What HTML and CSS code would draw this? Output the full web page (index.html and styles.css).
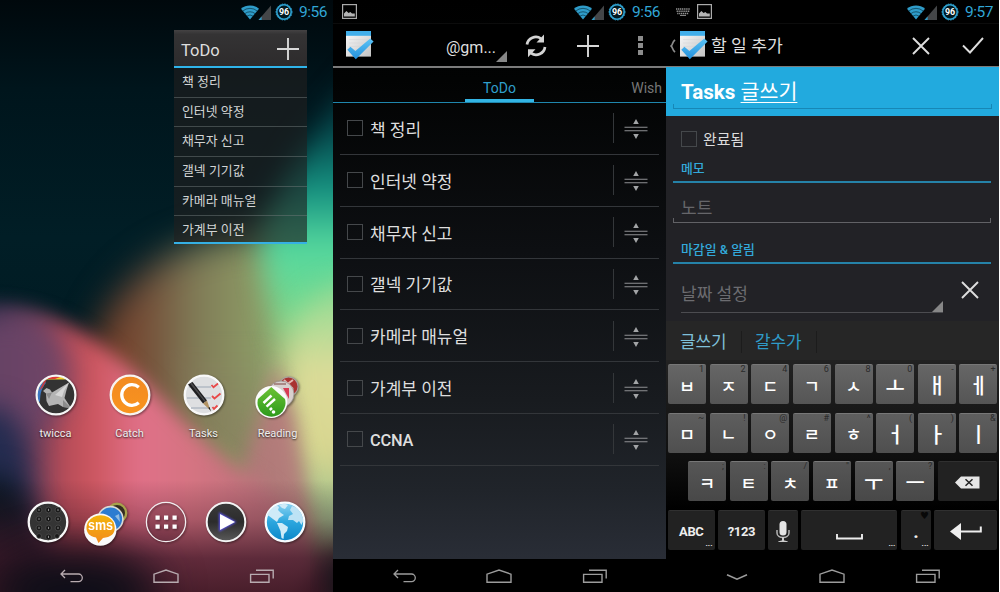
FILE: index.html
```html
<!DOCTYPE html>
<html lang="ko">
<head>
<meta charset="utf-8">
<title>Tasks</title>
<link rel="stylesheet" href="styles.css">
</head>
<body>
<svg class="defs" width="0" height="0" aria-hidden="true">
  <defs>
    <linearGradient id="gOrange" x1="0" y1="0" x2="0" y2="1"><stop offset="0" stop-color="#f28a22"/><stop offset="1" stop-color="#f9941e"/></linearGradient>
    <linearGradient id="gSms" x1="0" y1="0" x2="0" y2="1"><stop offset="0" stop-color="#f3b50c"/><stop offset="1" stop-color="#f28a1c"/></linearGradient>
    <linearGradient id="gGreen" x1="0" y1="0" x2="0" y2="1"><stop offset="0" stop-color="#6cc234"/><stop offset="1" stop-color="#2c9a1c"/></linearGradient>
    <linearGradient id="gSea" x1="0" y1="0" x2="0" y2="1"><stop offset="0" stop-color="#8ed4f2"/><stop offset=".5" stop-color="#2ba6de"/><stop offset="1" stop-color="#0c86c8"/></linearGradient>
    <linearGradient id="gDark" x1="0" y1="0" x2="0" y2="1"><stop offset="0" stop-color="#3a3a3a"/><stop offset=".5" stop-color="#2c2c2c"/><stop offset="1" stop-color="#5a5a5a"/></linearGradient>
    <linearGradient id="gPaper" x1="0" y1="0" x2="1" y2="1"><stop offset="0" stop-color="#fafafa"/><stop offset="1" stop-color="#c4c4c4"/></linearGradient>
    <linearGradient id="gCheck" x1="0" y1="0" x2="0" y2="1"><stop offset="0" stop-color="#5cc4f6"/><stop offset="1" stop-color="#2390dc"/></linearGradient>
    <filter id="glow" x="-50%" y="-50%" width="200%" height="200%"><feGaussianBlur stdDeviation="1"/></filter>
    <symbol id="radio" viewBox="0 0 32 16">
      <path d="M1 4.8 A14 14 0 0 1 19 4.8 L10 15.4 Z" fill="#2f9cc9"/>
      <path d="M2.6 7.2 A11 11 0 0 1 17.4 7.2 M4.8 9.7 A8 8 0 0 1 15.2 9.7 M7 12.1 A5 5 0 0 1 13 12.1" fill="none" stroke="#02232f" stroke-width=".6"/>
      <path d="M31 1.5 V16 H18.5 Z" fill="#444648"/><path d="M21.6 12.4 V16 H18.5 Z" fill="#2f9cc9"/>
    </symbol>
    <symbol id="battery" viewBox="0 0 18 18">
      <circle cx="9" cy="9" r="7.2" fill="#001820" stroke="#2fa3d2" stroke-width="1.6"/>
      <circle cx="9" cy="9" r="8" fill="none" stroke="#2fa3d2" stroke-width="1" stroke-dasharray="1.5 1.2"/>
      <text x="9" y="12.100" text-anchor="middle" font-family="Roboto,sans-serif" font-weight="700" font-size="8.900" fill="#fff">96</text>
    </symbol>
    <symbol id="photo" viewBox="0 0 15 15">
      <rect x=".6" y=".6" width="13.8" height="13.8" fill="none" stroke="#aaa" stroke-width="1.2"/>
      <path d="M2 12.6 V9.6 L4.4 7 L6.6 9 L8.4 8 L10 9.4 L12.8 9.6 V12.6 Z" fill="#b4b4b4"/>
    </symbol>
    <symbol id="keyboard" viewBox="0 0 14 8">
      <path d="M0 1 H14 M.6 3.2 H13.4 M1.2 5.4 H12.8" stroke="#929292" stroke-width="1.5" stroke-dasharray="1.3 .6"/><path d="M4 7.4 H10" stroke="#929292"/>
    </symbol>
    <symbol id="tasks" viewBox="0 0 28 29">
      <rect x="0" y="0" width="25" height="25.6" fill="url(#gPaper)"/>
      <path d="M3 8.6 H22 M3 12 H20 M3 15.4 H20 M3 19 H20" stroke="#d0d3d5" stroke-width=".5"/>
      <rect x="0" y="0" width="25" height="4.8" fill="#41aeea"/>
      <path d="M1.3 18.8 L4.4 15.7 L9.4 20 L24.2 7.4 L27.6 10.6 L9.8 28.2 Z" fill="url(#gCheck)"/>
    </symbol>
    <symbol id="plus" viewBox="0 0 22 22"><path d="M11 0 V22 M0 11 H22" stroke="#d8d8d8" stroke-width="1.9"/></symbol>
    <symbol id="cross" viewBox="0 0 18 18"><path d="M1 1 L17 17 M17 1 L1 17" stroke="#dedede" stroke-width="1.9"/></symbol>
    <symbol id="corner" viewBox="0 0 11 11"><path d="M11 0 V11 H0 Z" fill="#878787"/></symbol>
    <symbol id="back" viewBox="0 0 24 14"><path d="M6 1 L2 5 L6 9 M2 5 H19.5 A3.8 3.8 0 0 1 19.5 12.6 H11.5" fill="none" stroke="currentColor" stroke-width="1.3"/></symbol>
    <symbol id="home" viewBox="0 0 26 14"><path d="M1 13.3 V5.2 L13 1 L25 5.2 V13.3 Z" fill="none" stroke="currentColor" stroke-width="1.4"/></symbol>
    <symbol id="recents" viewBox="0 0 26 14"><path d="M1.6 5.4 H20 V13.3 H1.6 Z M7 1.2 H24.2 V9.5" fill="none" stroke="currentColor" stroke-width="1.4"/></symbol>
    <symbol id="down" viewBox="0 0 24 14"><path d="M2 5.8 L12 10.200 L22 5.8" fill="none" stroke="currentColor" stroke-width="1.6"/></symbol>
    <symbol id="grip" viewBox="0 0 24 20"><path d="M.5 8.2 H23.5 M.5 11.8 H23.5" stroke="#8e9092" stroke-width="1.1"/><path d="M12 0 L14.8 5 H9.2 Z M12 20 L14.8 15 H9.2 Z" fill="#a2a4a6"/></symbol>
  </defs>
</svg>

<main class="screens">
  <section class="screen launcher">
    <svg class="wallpaper" viewBox="0 0 333 592" color-interpolation-filters="sRGB" aria-hidden="true">
      <defs>
        <linearGradient id="w0" x1="0" y1="0" x2="0" y2="1"><stop offset="0" stop-color="#00080c"/><stop offset=".15" stop-color="#00151c"/><stop offset=".4" stop-color="#011e26"/><stop offset="1" stop-color="#02141c"/></linearGradient>
        <linearGradient id="w1" gradientUnits="userSpaceOnUse" x1="90" y1="0" x2="300" y2="0"><stop offset="0" stop-color="#7a3a22"/><stop offset=".28" stop-color="#74503a"/><stop offset=".5" stop-color="#807c58"/><stop offset=".75" stop-color="#8b9562"/><stop offset="1" stop-color="#8eb878"/></linearGradient>
        <linearGradient id="w1s" gradientUnits="userSpaceOnUse" x1="0" y1="340" x2="0" y2="450"><stop offset="0" stop-color="#8b7862" stop-opacity="0"/><stop offset="1" stop-color="#8b7862"/></linearGradient>
        <linearGradient id="w2" gradientUnits="userSpaceOnUse" x1="0" y1="0" x2="290" y2="0"><stop offset="0" stop-color="#3a3050"/><stop offset=".12" stop-color="#74405a"/><stop offset=".22" stop-color="#b64c58"/><stop offset=".32" stop-color="#cc565f"/><stop offset=".48" stop-color="#e07088"/><stop offset=".65" stop-color="#d67482"/><stop offset="1" stop-color="#b07078"/></linearGradient>
        <linearGradient id="w3" x1="0" y1="0" x2="0" y2="1"><stop offset="0" stop-color="#011e28"/><stop offset=".28" stop-color="#054a4e"/><stop offset=".48" stop-color="#159080"/><stop offset=".68" stop-color="#54d89e"/><stop offset="1" stop-color="#84d888"/></linearGradient>
        <linearGradient id="w4" x1="0" y1="0" x2="0" y2="1"><stop offset="0" stop-color="#88dc94"/><stop offset=".35" stop-color="#dcdb98"/><stop offset=".65" stop-color="#d8d690"/><stop offset="1" stop-color="#7fb48a"/></linearGradient>
        <linearGradient id="w5" x1="0" y1="0" x2="0" y2="1"><stop offset="0" stop-color="#30121f" stop-opacity="0"/><stop offset=".35" stop-color="#481828" stop-opacity=".3"/><stop offset=".7" stop-color="#45192a" stop-opacity=".8"/><stop offset="1" stop-color="#3e1724" stop-opacity=".92"/></linearGradient>
        <filter id="b10" x="-50%" y="-50%" width="200%" height="200%"><feGaussianBlur stdDeviation="9"/></filter>
        <filter id="b14" x="-50%" y="-50%" width="200%" height="200%"><feGaussianBlur stdDeviation="14"/></filter>
        <filter id="b18" x="-50%" y="-50%" width="200%" height="200%"><feGaussianBlur stdDeviation="18"/></filter>
        <filter id="b22" x="-80%" y="-80%" width="260%" height="260%"><feGaussianBlur stdDeviation="22"/></filter>
      </defs>
      <rect width="333" height="592" fill="url(#w0)"/>
      <path d="M84 420 C82 350 108 292 158 262 C205 232 270 229 375 229 V560 H180 Z" fill="url(#w1)" filter="url(#b18)"/>
      <path d="M385 50 C335 95 288 165 262 228 C260 262 272 305 284 340 L390 340 Z" fill="url(#w3)" filter="url(#b14)"/>
      <path d="M380 278 C318 280 290 318 283 352 C281 420 298 500 325 545 L380 540 Z" fill="url(#w4)" filter="url(#b14)"/>
      <path d="M150 340 H275 L255 480 Z" fill="url(#w1s)" opacity=".5" filter="url(#b10)"/>
      <path d="M236 492 L276 362 L296 420 L312 520 L310 580 L240 580 Z" fill="#b8747c" opacity=".85" filter="url(#b10)"/>
      <path d="M-60 304 C40 300 82 327 125 364 C168 402 198 442 248 474 C275 492 300 520 306 560 L300 650 L-60 650 Z" fill="url(#w2)" filter="url(#b10)"/>
      <ellipse cx="10" cy="376" rx="60" ry="62" fill="#6c4568" opacity=".9" filter="url(#b14)"/>
      <ellipse cx="-8" cy="475" rx="36" ry="70" fill="#242c50" filter="url(#b14)"/>
      <ellipse cx="-10" cy="570" rx="56" ry="95" fill="#0a1520" filter="url(#b14)"/>
      <rect y="480" width="333" height="112" fill="url(#w5)"/>
      <ellipse cx="75" cy="592" rx="85" ry="42" fill="#0e0e18" filter="url(#b22)"/>
      <ellipse cx="350" cy="585" rx="20" ry="38" fill="#0b1417" filter="url(#b14)"/>
    </svg>
    <header class="status"><div class="status-right"><svg class="radio"><use href="#radio"/></svg><svg class="battery"><use href="#battery"/></svg><time>9:56</time></div></header>
    <section class="widget">
      <div class="widget-head"><span>ToDo</span><svg class="i22"><use href="#plus"/></svg></div>
      <ul class="widget-list"><li>책 정리</li><li>인터넷 약정</li><li>채무자 신고</li><li>갤넥 기기값</li><li>카메라 매뉴얼</li><li>가계부 이전</li></ul>
    </section>
    <div class="apps">
      <div class="app"><svg class="app-icon" viewBox="0 0 42 42"><circle cx="21" cy="21" r="19.4" fill="#333"/><path d="M3 27 A19 19 0 0 1 9 7 L11 9 C7 13 5 19 5 28 Z" fill="#3a76c0"/><path d="M4 17 L9 7 L12 5 L8 13 Z" fill="#c83c3c"/><path d="M10 5 C17 1.500 26 2 31 4.500 L30 5.500 H12 Z" fill="#f0cf30"/><path d="M11 5 C17 1.500 21 2 25 3 L20 5 Z" fill="#dd3c38"/><path d="M8 17 L11.500 14 L15 15.500 L17 18.500 L34 8.500 L31.500 16 L29.500 24 L36 34 L28 33 L23 30 L14 32 L11.500 27 L11 19.500 Z" fill="#b4b4b4"/><path d="M20 21 L34 8.500 L29 17 L27 23 Z" fill="#d6d6d6"/><path d="M28 26 L36 34 L28 33 Z M11 19.500 L17 18.500 L14 25 Z" fill="#8c8c8c"/><circle cx="21" cy="21" r="19.4" fill="none" stroke="#f6f6f6" stroke-width="2.2"/></svg><span>twicca</span></div>
      <div class="app"><svg class="app-icon" viewBox="0 0 42 42"><circle cx="21" cy="21" r="19.3" fill="url(#gOrange)" stroke="#f8f4f0" stroke-width="2.3"/><path d="M29.8 13.2 A10.3 10.3 0 1 0 29.8 28.8" fill="none" stroke="#fff" stroke-width="3.3"/></svg><span>Catch</span></div>
      <div class="app"><svg class="app-icon" viewBox="0 0 42 42"><circle cx="21" cy="21" r="19.3" fill="#dedfe1" stroke="#f8f8f8" stroke-width="2.3"/><path d="M6 13 H28 M4 24 H28 M8 34 H27" stroke="#bdc3cb" stroke-width="1.8"/><path d="M28.5 11 L30.5 13.3 L35 9.5 M29 22 L31.5 24.5 L37.5 19.5 M29.5 33 L31 35 L34.5 31.5" fill="none" stroke="#e84848" stroke-width="1.8"/><path d="M5 10.5 L9.5 8 L24 26.500 L20 29.500 Z" fill="#1e1e20"/><path d="M7 9.5 L8.500 8.500 L23 27.4 L22 28.2 Z" fill="#4a4a4c"/><path d="M20 29.500 L24 26.500 L27.500 36.500 Z" fill="#b29363"/><path d="M25.3 33.8 L26.5 33 L28 37.4 Z" fill="#111"/></svg><span>Tasks</span></div>
      <div class="app"><svg class="app-icon" viewBox="0 0 42 42"><circle cx="31.5" cy="12.5" r="9.6" fill="#a93331" stroke="#aaa19c" stroke-width="1.2"/><path d="M27 6 L36 15 M36 6 L29 11" stroke="#e4b6b0" stroke-width="2"/><circle cx="24" cy="20" r="13" fill="#d8d0ce" stroke="#9b928f" stroke-width=".8"/><path d="M26 14 H32 V25 Z" fill="#d83c54"/><path d="M17 10 L29 10" stroke="#8b5d58" stroke-width="1.2"/><circle cx="14.3" cy="28" r="16" fill="#fbfbfb"/><path d="M14.3 13 L28 25 A14 14 0 1 1 1 25 Z" fill="url(#gGreen)"/><path d="M6.500 29 L14.500 21.500 M9.500 32.600 L18 25 M12.800 36 L15 34" stroke="#fff" stroke-width="2.500"/><circle cx="16.500" cy="38" r="1.8" fill="#fff"/></svg><span>Reading</span></div>
    </div>
    <div class="dock">
      <svg class="app-icon" viewBox="0 0 42 42"><circle cx="21" cy="21" r="19.3" fill="#343434" stroke="#f8f8f8" stroke-width="2.3"/><g fill="#191919" stroke="#5c5c5c" stroke-width=".6"><circle cx="12" cy="9" r="2.9"/><circle cx="21.5" cy="9" r="2.9"/><circle cx="31" cy="9" r="2.9"/><circle cx="12" cy="18" r="2.9"/><circle cx="21.5" cy="18" r="2.9"/><circle cx="31" cy="18" r="2.9"/><circle cx="12" cy="27" r="2.9"/><circle cx="21.5" cy="27" r="2.9"/><circle cx="31" cy="27" r="2.9"/><circle cx="12" cy="35" r="2.4"/><circle cx="21.5" cy="36" r="2.9"/><circle cx="30" cy="35" r="2.4"/></g><path d="M12 7.8 V10 M21.500 7.800 V10 M31 7.800 V10 M12 16.800 V19 M21.500 16.800 V19 M31 16.800 V19 M12 25.800 V28 M21.500 25.800 V28 M31 25.800 V28 M21.500 34.800 V37" stroke="#8a8a8a" stroke-width="1"/></svg>
      <svg class="app-icon" viewBox="0 0 42 42"><circle cx="31" cy="12" r="9.2" fill="#332c20" stroke="#a6a24c" stroke-width="2.4"/><circle cx="24.500" cy="18" r="12.400" fill="#2b7cd0" stroke="#dadad6" stroke-width="1.600"/><path d="M29 15 L33 13 L34 21 Z" fill="#8dbbe2"/><circle cx="14.300" cy="28.600" r="16.200" fill="#fafafa"/><path d="M2 21 A15 14.500 0 0 1 27.500 21 C31 31 27 36 17 37 L12.500 42 L10 36.500 C1 35 -1.500 28 2 21 Z" fill="url(#gSms)"/><text x="14.500" y="29" text-anchor="middle" textLength="25" lengthAdjust="spacingAndGlyphs" font-family="Liberation Sans,sans-serif" font-weight="700" font-size="14.500" fill="#fff">sms</text></svg>
      <svg class="app-icon" viewBox="0 0 42 42"><circle cx="21" cy="21" r="19.600" fill="#401626" fill-opacity=".15" stroke="#f2eef0" stroke-width="1.300"/><path d="M10.500 14.500 h4.200 v4.200 h-4.200z M19 14.500 h4.200 v4.200 h-4.200z M27.500 14.500 h4.200 v4.200 h-4.200z M10.500 23.500 h4.200 v4.200 h-4.200z M19 23.500 h4.200 v4.200 h-4.200z M27.500 23.500 h4.200 v4.200 h-4.200z" fill="#fff"/></svg>
      <svg class="app-icon" viewBox="0 0 42 42"><circle cx="21" cy="21" r="19.300" fill="url(#gDark)" stroke="#f4f4f4" stroke-width="2"/><path d="M15 13 L29.500 21 L15 29 Z" fill="#5650e8" stroke="#5650e8" stroke-width="2" filter="url(#glow)"/><path d="M15 13 L30 21 L15 29 Z" fill="#fff"/></svg>
      <svg class="app-icon" viewBox="0 0 42 42"><circle cx="21" cy="21" r="19.300" fill="url(#gSea)" stroke="#f8fcff" stroke-width="2.300"/><path d="M3 14 C6 8 10 5 13 4.500 L15 6 L14 9 L17 12 L20 14 L15 17 L13 21 L9 18 L5 15 Z M15 4 L20 2.500 L24 4 L21 8 L18 7 Z M13 22 L18 22 L24 26 L23 30 L20 33 L19.500 38 L17.500 37 L16.500 30 Z" fill="#cfebf8"/><path d="M26 9 L28 5 L33 7 L37 12 L39.500 19 L37.500 24 L35 20 L33 22 L29 19 L24 19 L25 15 L29 13 Z" fill="#bde3f5"/></svg>
    </div>
    <nav class="nav translucent"><svg><use href="#back"/></svg><svg><use href="#home"/></svg><svg><use href="#recents"/></svg></nav>
  </section>

  <section class="screen list">
    <header class="status"><svg class="photo"><use href="#photo"/></svg><div class="status-right"><svg class="radio"><use href="#radio"/></svg><svg class="battery"><use href="#battery"/></svg><time>9:56</time></div></header>
    <div class="actionbar">
      <svg class="logo"><use href="#tasks"/></svg>
      <div class="account"><span>@gm...</span><svg class="corner"><use href="#corner"/></svg></div>
      <svg class="refresh" viewBox="0 0 22 24"><path d="M2 10.500 A9 8.800 0 0 1 16 4.600 M20 13 A9 8.800 0 0 1 6 19.200" fill="none" stroke="#d4d4d4" stroke-width="2.700"/><path d="M19 .5 V8.600 H11.500 Z M3 23.300 V15.200 H10.500 Z" fill="#d4d4d4"/></svg>
      <svg class="i22"><use href="#plus"/></svg>
      <svg class="more" viewBox="0 0 5 19"><path d="M0 0h5v5H0z M0 7h5v5H0z M0 14h5v5H0z" fill="#8c8c8c"/></svg>
    </div>
    <div class="tabs"><span class="tab active">ToDo</span><span class="tab next">Wish</span></div>
    <ul class="tasks">
      <li><i class="box"></i><span>책 정리</span><svg class="grip"><use href="#grip"/></svg></li>
      <li><i class="box"></i><span>인터넷 약정</span><svg class="grip"><use href="#grip"/></svg></li>
      <li><i class="box"></i><span>채무자 신고</span><svg class="grip"><use href="#grip"/></svg></li>
      <li><i class="box"></i><span>갤넥 기기값</span><svg class="grip"><use href="#grip"/></svg></li>
      <li><i class="box"></i><span>카메라 매뉴얼</span><svg class="grip"><use href="#grip"/></svg></li>
      <li><i class="box"></i><span>가계부 이전</span><svg class="grip"><use href="#grip"/></svg></li>
      <li><i class="box"></i><span class="latin">CCNA</span><svg class="grip"><use href="#grip"/></svg></li>
    </ul>
    <nav class="nav"><svg><use href="#back"/></svg><svg><use href="#home"/></svg><svg><use href="#recents"/></svg></nav>
  </section>

  <section class="screen editor">
    <header class="status"><svg class="kbd"><use href="#keyboard"/></svg><svg class="photo second"><use href="#photo"/></svg><div class="status-right"><svg class="radio"><use href="#radio"/></svg><svg class="battery"><use href="#battery"/></svg><time>9:57</time></div></header>
    <div class="actionbar">
      <svg class="up" viewBox="0 0 6 14"><path d="M5 .8 C2.300 3 2.500 6 1.200 7 C2.500 8 2.300 11 5 13.200" fill="none" stroke="#8c8c8c" stroke-width="1.700"/></svg>
      <svg class="logo"><use href="#tasks"/></svg>
      <h1>할 일 추가</h1>
      <svg class="cancel"><use href="#cross"/></svg>
      <svg class="done" viewBox="0 0 22 17"><path d="M1 8.500 L8 15.500 L21 1" fill="none" stroke="#dedede" stroke-width="1.900"/></svg>
    </div>
    <div class="title-band"><div class="title-field"><b>Tasks</b> <u>글쓰기</u></div></div>
    <form class="form">
      <label class="complete"><i class="box"></i><span>완료됨</span></label>
      <h2 class="memo">메모</h2>
      <div class="note">노트</div>
      <h2 class="due">마감일 &amp; 알림</h2>
      <div class="date"><div class="date-field"><span>날짜 설정</span><svg class="corner"><use href="#corner"/></svg></div><svg class="cancel"><use href="#cross"/></svg></div>
    </form>
    <div class="suggest"><span class="first">글쓰기</span><span>갈수가</span></div>
    <div class="keyboard">
      <div class="krow"><kbd>ㅂ<sup>1</sup></kbd><kbd>ㅈ<sup>2</sup></kbd><kbd>ㄷ<sup>4</sup></kbd><kbd>ㄱ<sup>6</sup></kbd><kbd>ㅅ<sup>8</sup></kbd><kbd class="vowel">ㅗ<sup>0</sup></kbd><kbd class="vowel">ㅐ<sup>-</sup></kbd><kbd class="vowel">ㅔ<sup>+</sup></kbd></div>
      <div class="krow"><kbd>ㅁ<sup>~</sup></kbd><kbd>ㄴ<sup>!</sup></kbd><kbd>ㅇ<sup>@</sup></kbd><kbd>ㄹ<sup>#</sup></kbd><kbd>ㅎ<sup>^</sup></kbd><kbd class="vowel">ㅓ<sup>(</sup></kbd><kbd class="vowel">ㅏ<sup>)</sup></kbd><kbd class="vowel">ㅣ<sup>&amp;</sup></kbd></div>
      <div class="krow third"><kbd>ㅋ<sup>;</sup></kbd><kbd>ㅌ<sup>:</sup></kbd><kbd>ㅊ<sup>/</sup></kbd><kbd>ㅍ<sup>"</sup></kbd><kbd class="vowel">ㅜ<sup>,</sup></kbd><kbd class="vowel">ㅡ<sup>?</sup></kbd><kbd class="fn"><svg class="bksp" viewBox="0 0 25 13"><path d="M0 6.500 L6 .5 H24.500 V12.500 H6 Z" fill="#e6e6e6"/><path d="M10.500 3.200 L17.500 9.800 M17.500 3.200 L10.500 9.800" stroke="#222" stroke-width="1.500"/></svg></kbd></div>
      <div class="krow fourth">
        <kbd class="fn">ABC<small>...</small></kbd><kbd class="fn">?123</kbd>
        <kbd class="fn"><svg class="mic" viewBox="0 0 14 22"><rect x="3.500" y="0" width="7" height="14.500" rx="3.500" fill="#e4e4e4"/><path d="M1 9 V12 C1 18 13 18 13 12 V9" fill="none" stroke="#b4b4b4" stroke-width="1.500"/><path d="M7 16 V20" stroke="#ccc" stroke-width="2"/><path d="M2 21 C3 19 11 19 12 21 Z" fill="#ccc"/></svg></kbd>
        <kbd class="fn"><svg class="space" viewBox="0 0 27 6"><path d="M1 0 V4.500 H26 V0" fill="none" stroke="#ececec" stroke-width="1.900"/></svg><small>...</small></kbd>
        <kbd class="fn dot">.<sup>♥</sup><small>...</small></kbd>
        <kbd class="fn"><svg class="enter" viewBox="0 0 32 17"><path d="M0 8.500 L11 0 V17 Z" fill="#eee"/><path d="M10 8.500 H30.800 V3.500" fill="none" stroke="#eee" stroke-width="2"/></svg></kbd>
      </div>
    </div>
    <nav class="nav"><svg><use href="#down"/></svg><svg><use href="#home"/></svg><svg><use href="#recents"/></svg></nav>
  </section>
</main>
</body>
</html>
```
FILE: styles.css
```css
* { box-sizing: border-box; }
html, body { margin: 0; padding: 0; background: #fff; }
body { width: 1000px; height: 592px; overflow: hidden; font-family: Roboto, "Noto Sans CJK KR", sans-serif; color: #dedede; }
ul { list-style: none; margin: 0; padding: 0; }
h1, h2 { margin: 0; font-weight: 400; }
svg { display: block; flex: none; }
.defs { position: absolute; }
.screens { display: grid; grid-template-columns: repeat(3, 333px); height: 592px; }
.screen { position: relative; display: flex; flex-direction: column; height: 592px; overflow: hidden; background: #000; }

/* Status bar */
.status { display: flex; align-items: center; height: 23px; flex: none; }
.status-right { display: flex; align-items: center; margin-left: auto; padding-right: 5px; }
.radio { width: 32px; height: 16px; margin-right: 3px; }
.battery { width: 18px; height: 18px; margin-right: 6px; }
.status time { width: 29px; font-size: 15.500px; line-height: 23px; letter-spacing: -.45px; padding-top: 1px; color: #31a6d6; }
.photo { width: 15px; height: 15px; margin-left: 9px; }
.kbd { width: 14px; height: 8px; margin-left: 10px; }
.photo.second { margin-left: 7px; }

/* Navigation bar */
.nav { display: grid; grid-template-columns: repeat(3, 1fr); place-items: center; height: 33px; margin-top: auto; padding: 1px 23px 0; background: #000; color: #9c9c9c; flex: none; }
.nav svg { width: 26px; height: 14px; }
.nav.translucent { background: none; color: #b8abb0; }

/* Launcher */
.wallpaper { position: absolute; inset: 0; width: 333px; height: 592px; }
.launcher > :not(.wallpaper) { position: relative; }
.widget { width: 133px; height: 214px; margin: 7px 0 0 174px; border-bottom: 2px solid #35b0e4; }
.widget-head { display: flex; justify-content: space-between; align-items: center; height: 38px; padding: 1px 8px 0 7px; font-size: 16.500px; background: linear-gradient(#444243, #343334 12%, #2d2b2c); border-bottom: 2px solid #2fb4ea; }
.widget-head span { padding-top: 3px; }
.i22 { width: 22px; height: 22px; }
.widget-list { height: 174px; overflow: hidden; background: rgba(32, 32, 32, .64); }
.widget-list li { height: 29.650px; border-bottom: 1px solid rgba(110, 120, 120, .5); padding: 0 8px; font-size: 12.900px; line-height: 28.700px; color: #d2d4d4; }
.apps { display: grid; grid-template-columns: repeat(4, 74px); margin: 130px 0 0 18.500px; }
.app { display: flex; flex-direction: column; align-items: center; font-size: 11px; line-height: 14px; gap: 11px; text-shadow: 0 1px 2px rgba(0, 0, 0, .8); color: #eee; }
.app-icon { width: 42px; height: 42px; overflow: visible; filter: drop-shadow(1px 1px 1px rgba(0, 0, 0, .45)); }
.dock { display: grid; grid-template-columns: repeat(5, 59.300px); justify-items: center; margin: 60px 0 0 18px; }

/* Action bar */
.actionbar { display: flex; align-items: center; height: 45px; flex: none; border-top: 1px solid #0c0c0c; border-bottom: 2px solid #7b7b7b; padding-top: 1px; }
.logo { width: 28px; height: 29px; margin-left: 13px; }
.account { display: flex; align-items: flex-end; margin-left: 72px; font-size: 16px; height: 34px; }
.account span { width: 49px; height: 34px; line-height: 38px; }
.corner { width: 11px; height: 11px; }
.account .corner { margin: 0 0 1px 1px; }
.refresh { width: 22px; height: 24px; margin-left: 18px; }
.refresh + .i22 { margin-left: 30px; }
.more { width: 5px; height: 19px; margin-left: 39px; }

/* Task list */
.list { background: linear-gradient(#000 0, #020303 80px, #0d0f12 250px, #181b1f 400px, #20242a 490px, #292d36 558px); }
.list .actionbar { background: #000; }
.tabs { display: grid; grid-template-columns: 132px 69px 132px; height: 35px; flex: none; border-bottom: 1px solid #1f86ad; font-size: 14px; text-align: center; }
.tab { height: 34px; padding-top: 4px; line-height: 33px; }
.tab.active { grid-column: 2; color: #2f9fcc; border-bottom: 3px solid #33b5e5; }
.tab.next { text-align: right; color: #777; padding-right: 4px; }
.tasks { padding: 0 7px; }
.tasks li { display: flex; align-items: center; height: 51.850px; border-bottom: 1px solid #33363a; font-size: 17px; }
.box { width: 16px; height: 16px; border: 1px solid #45484b; flex: none; }
.tasks .box { margin: 0 7px 0 7px; }
.tasks span { flex: 1; }
.tasks .latin { font-size: 16.400px; font-weight: 500; letter-spacing: -.2px; padding-top: 2px; }
.grip { box-sizing: content-box; width: 24px; height: 20px; padding: 6px 11px 4px 10px; border-left: 1px solid #34373a; }

/* Editor */
.editor { background: #222226; }
.editor .status, .editor .actionbar { background: #000; }
.editor .actionbar { height: 44px; border-bottom-width: 1px; }
.up { width: 6px; height: 14px; margin-left: 4px; }
.editor .logo { margin-left: 4px; }
h1 { font-size: 17.200px; margin-left: 3px; padding-bottom: 2px; }
.cancel { width: 18px; height: 18px; }
.actionbar .cancel { margin-left: auto; }
.done { width: 22px; height: 17px; margin: 0 15px 0 32px; }
.title-band { height: 49px; padding: 7px; background: #22aade; flex: none; }
.title-field { position: relative; height: 35px; padding-left: 8px; font-size: 20.600px; line-height: 36px; color: #fff; }
.title-field::after { content: ""; position: absolute; left: 0; right: 0; bottom: 0; height: 4px; border: 1px solid #1787b6; border-top: 0; }
.title-field u { text-decoration-thickness: 1px; text-underline-offset: 3px; }
.form { height: 205px; flex: none; padding: 0 8px 0 7px; }
.complete { display: flex; align-items: center; gap: 6px; height: 46px; padding-left: 8px; font-size: 14.900px; }
.complete span { padding-bottom: 2px; }
h2 { padding-left: 8px; font-size: 12.900px; color: #33a9da; border-bottom: 2px solid #2582a8; font-weight: 500; }
.memo { height: 21px; line-height: 13px; }
.note { height: 40px; padding: 0 8px; font-size: 17px; line-height: 51px; color: #66666a; background: linear-gradient(#626266, #626266) left bottom / 1px 4px no-repeat, linear-gradient(#626266, #626266) right bottom / 1px 4px no-repeat; border-bottom: 1px solid #626266; }
.due { height: 41px; line-height: 54px; }
.date { display: flex; align-items: center; height: 51px; padding-left: 8px; }
.date-field { display: flex; align-items: flex-end; justify-content: space-between; width: 262px; height: 47px; border-bottom: 1px solid #4c4c50; font-size: 17px; color: #6c6c70; }
.date-field span { line-height: 36px; }
.date .cancel { margin-left: 18px; }

/* Keyboard */
.suggest { display: flex; align-items: center; height: 39px; flex: none; background: #262626; font-size: 16.900px; color: #2f9bc8; padding: 2px 0 0 1px; }
.suggest span { width: 75px; padding: 3px 0 3px 13px; border-right: 1px solid #1c1c1c; height: 22px; line-height: 16px; }
.suggest .first { color: #7fc0da; }
.keyboard { display: flex; flex-direction: column; gap: 8.700px; height: 199px; padding: 4px 2px 0; background: linear-gradient(#222, #111 45%, #000 75%); flex: none; }
.krow { display: grid; grid-template-columns: repeat(8, 38px); gap: 3.650px; height: 40px; }
.krow.third { grid-template-columns: repeat(6, 38px) 59.500px; padding-left: 20px; }
.krow.fourth { grid-template-columns: 46.500px 46.500px 29.500px 96px 29.500px 63px; }
kbd { position: relative; display: flex; align-items: center; justify-content: center; padding-top: 2px; border-radius: 2px; background: linear-gradient(#666, #555); border-top: 1px solid #777; font: 500 17.500px/1 "Noto Sans CJK KR", sans-serif; color: #fff; }
kbd.vowel { font-size: 21px; padding-top: 0; }
.krow:nth-child(2) kbd { background: linear-gradient(#5e5e5e, #4f4f4f); }
.krow.third kbd { background: linear-gradient(#565656, #484848); }
.krow kbd.fn { background: #222; border-top-color: #303030; font: 700 13px/1 Roboto, sans-serif; letter-spacing: -.4px; color: #eee; padding-top: 2px; }
kbd sup { position: absolute; top: 0; right: 2px; font: 400 9px/9px Roboto, sans-serif; color: #2a2a2a; }
kbd small { position: absolute; right: 2px; bottom: 3px; font: 700 8px/6px Roboto, sans-serif; letter-spacing: 0; }
.krow kbd.fn.dot { font-size: 19px; }
kbd.dot sup { font: 10px/9px "DejaVu Sans", sans-serif; color: #080808; }
.bksp { width: 25px; height: 13px; }
.mic { width: 14px; height: 22px; }
.space { width: 27px; height: 6px; margin-top: 11px; }
.enter { width: 32px; height: 17px; }
```
